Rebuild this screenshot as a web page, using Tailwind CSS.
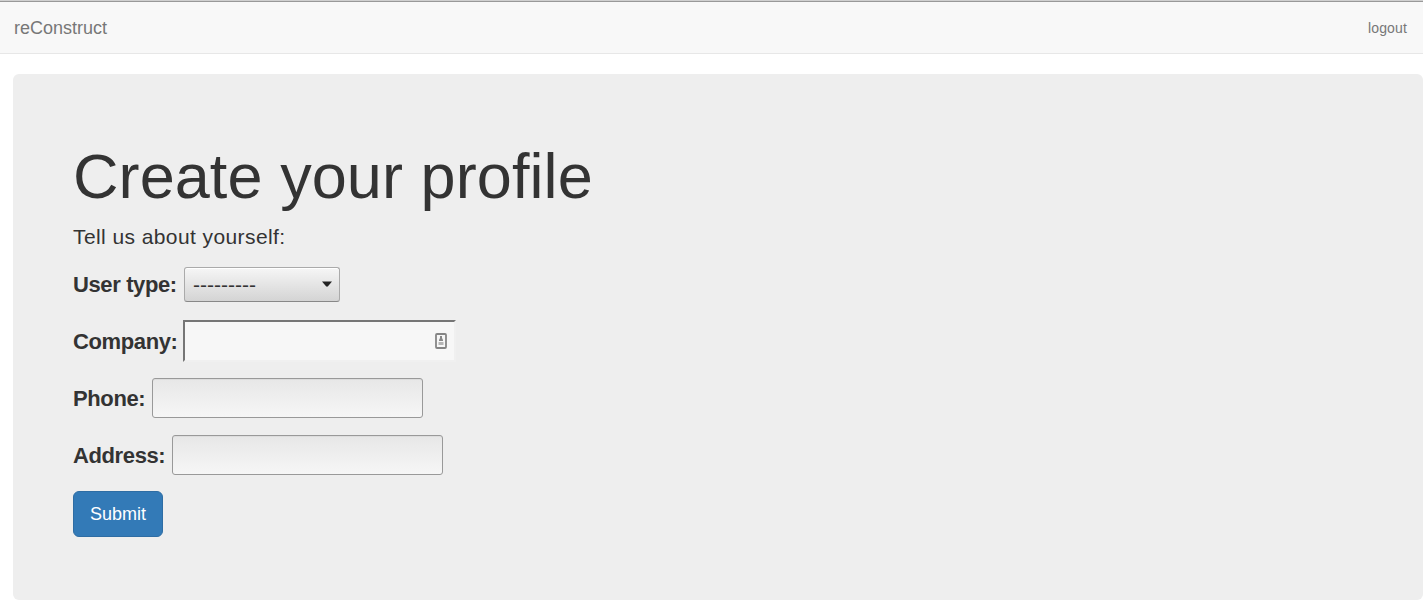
<!DOCTYPE html>
<html lang="en">
<head>
<meta charset="utf-8">
<title>reConstruct</title>
<script src="https://cdn.jsdelivr.net/npm/@tailwindcss/browser@4"></script>
</head>
<body class="bg-white text-[#333] font-['Liberation_Sans',Arial,sans-serif] overflow-hidden">
<nav class="h-[54px] border-t border-t-[#d0d0d0] border-b border-b-[#e7e7e7] bg-[#f8f8f8] text-[#777]">
  <div class="h-[52px] border-t border-t-[#999] flex items-center justify-between pl-[14px] pr-4">
    <a class="text-[18px] leading-5 whitespace-nowrap"><span>reConstruct</span></a>
    <a class="text-[14px] leading-5 tracking-[0.15px] whitespace-nowrap"><span>logout</span></a>
  </div>
</nav>
<main class="ml-[13px] mt-5 h-[526px] rounded-[6px] bg-[#eee] px-[60px] pt-[68px]">
  <h1 class="text-[63px] leading-[69px] tracking-[0.08px] whitespace-nowrap"><span>Create your profile</span></h1>
  <p class="mt-[11px] h-[30px] text-[21px] leading-[30px] tracking-[0.41px] whitespace-nowrap"><span>Tell us about yourself:</span></p>
  <form class="mt-[4px] text-[22px] leading-[30px] tracking-[-0.38px] font-bold">
    <div class="flex h-[57px] items-center">
      <label class="w-[111px] whitespace-nowrap"><span>User type:</span></label>
      <div class="flex h-[35px] w-[156px] items-center justify-between rounded-[3px] border border-[#aaa] border-b-[#888] bg-linear-to-b from-[#f6f6f6] to-[#d4d4d4] pl-[8px] pr-[7px] font-normal tracking-normal shadow-[inset_0_1px_0_#fff]">
        <span class="text-[21px] leading-[30px] text-[#333]">---------</span>
        <svg class="mb-[2px]" width="10" height="6" viewBox="0 0 10 6"><path d="M0 .5h10L6 5.3Q5 6 4 5.3z" fill="#222"/></svg>
      </div>
    </div>
    <div class="flex h-[57px] items-center">
      <label class="w-[110px] whitespace-nowrap"><span>Company:</span></label>
      <div class="mb-[1px] flex h-[42px] w-[273px] items-center justify-end border-2 border-t-[#767676] border-l-[#767676] border-r-[#f0f0f0] border-b-[#f0f0f0] bg-[#f7f7f7] pr-[7px]">
        <svg width="12" height="16" viewBox="0 0 12 16"><rect x="1" y="1" width="10" height="14" rx="1" fill="#f7f7f7" stroke="#858585" stroke-width="1.8"/><path d="M5 3h2v2l1 2v1H4V7l1-2z" fill="#888"/><path d="M3.5 9h5v3h-5z" fill="#b5b5b5"/></svg>
      </div>
    </div>
    <div class="flex h-[57px] items-center">
      <label class="w-[79px] whitespace-nowrap"><span>Phone:</span></label>
      <div class="mb-[2px] h-10 w-[271px] rounded-[3px] border border-[#999] bg-linear-to-b from-[#e7e7e7] to-[#f6f6f6] shadow-[inset_0_1px_0_#ddd]"></div>
    </div>
    <div class="flex h-[57px] items-center">
      <label class="w-[99px] whitespace-nowrap"><span>Address:</span></label>
      <div class="mb-[2px] h-10 w-[271px] rounded-[3px] border border-[#999] bg-linear-to-b from-[#e7e7e7] to-[#f6f6f6] shadow-[inset_0_1px_0_#ddd]"></div>
    </div>
    <button type="button" class="mt-[7px] flex h-[46px] w-[90px] items-center justify-center rounded-[6px] border border-[#2e6da4] bg-[#337ab7] text-[18px] font-normal leading-6 tracking-normal text-white"><span>Submit</span></button>
  </form>
</main>
</body>
</html>
